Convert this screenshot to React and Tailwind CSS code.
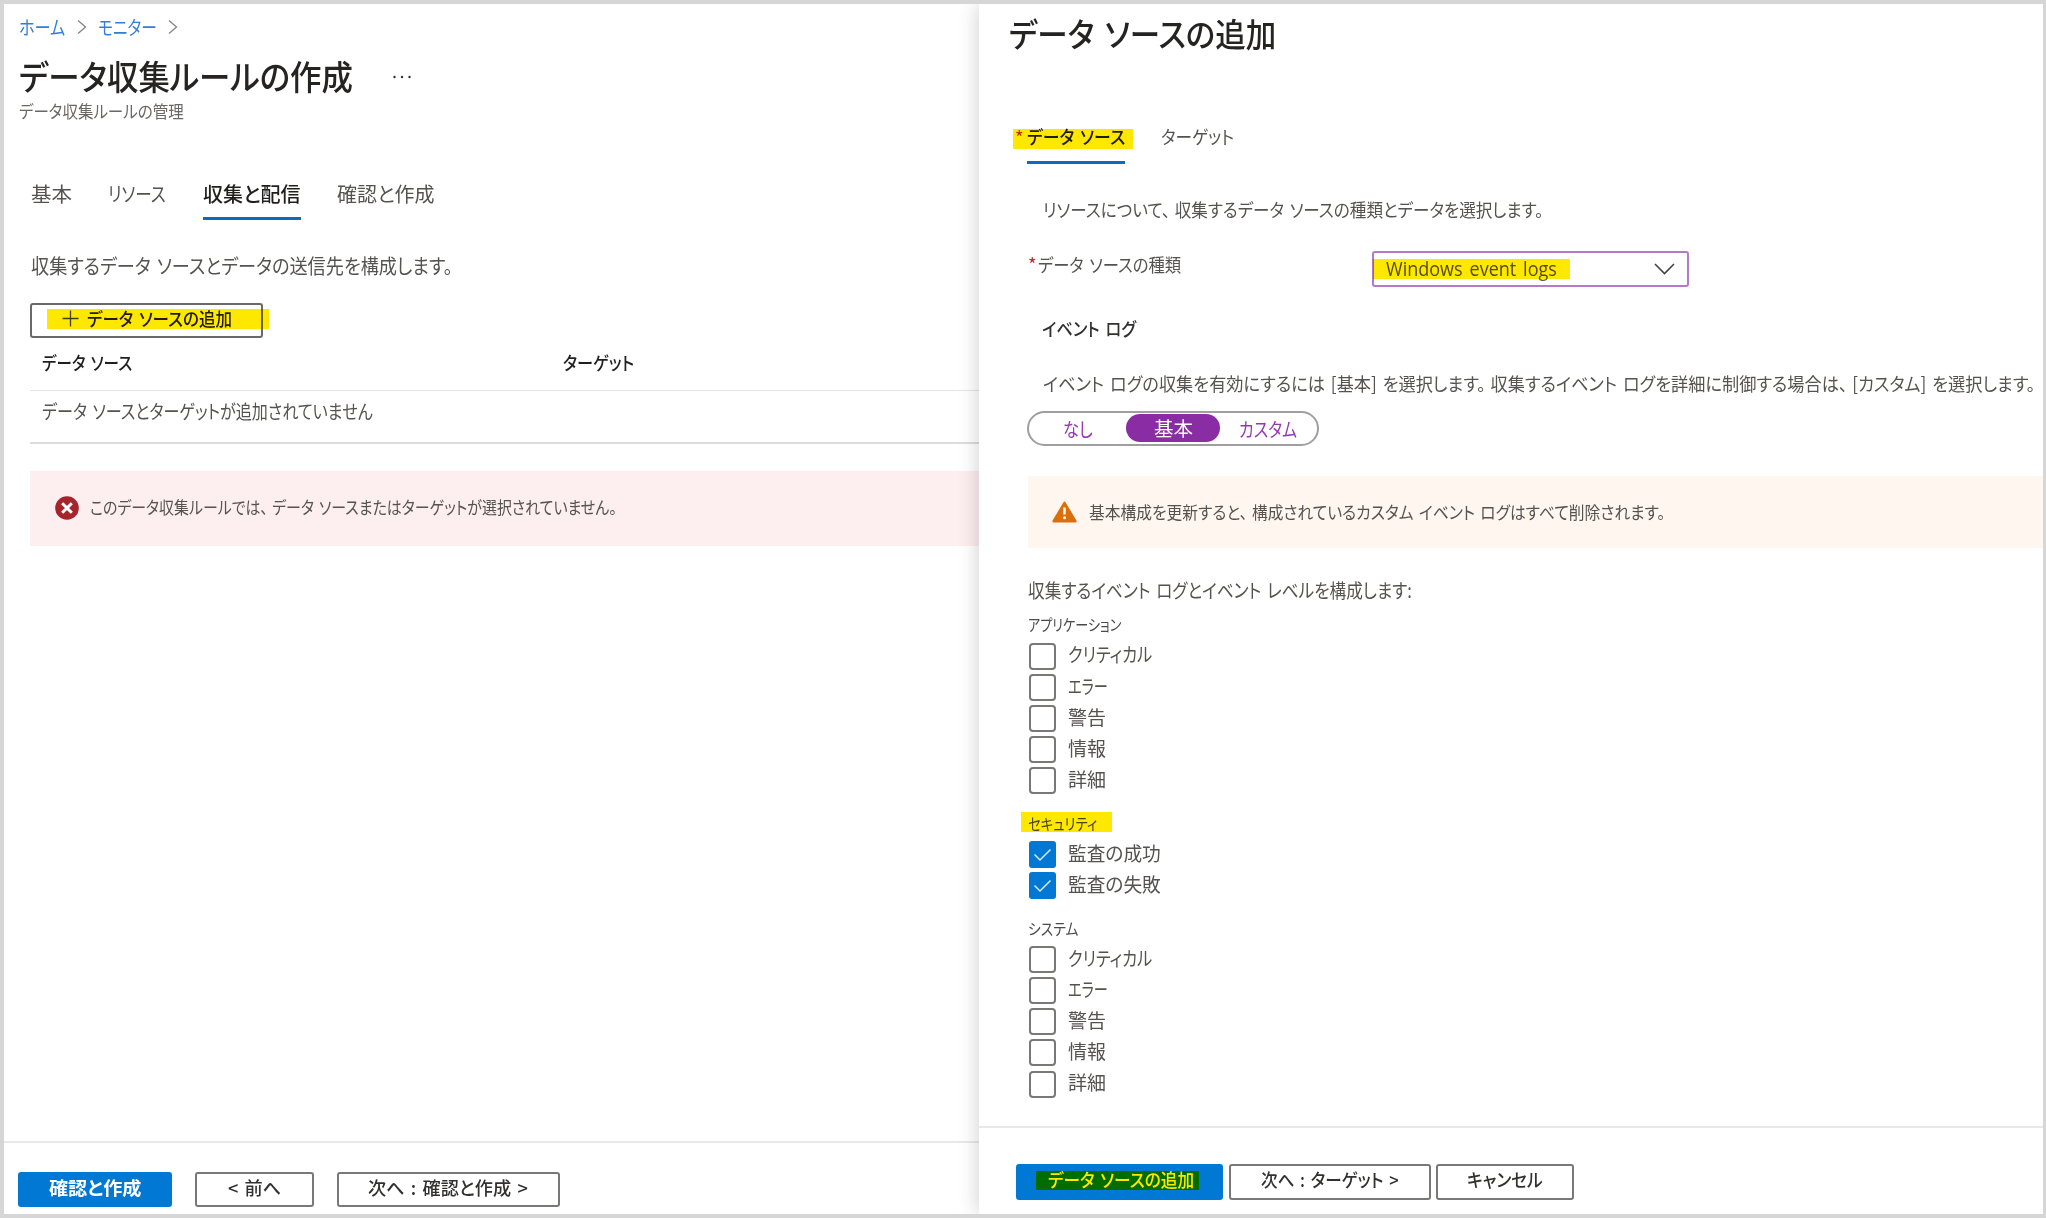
import { useLayoutEffect, useRef } from "react";

// Single line of text condensed horizontally to fill the width of its box.
function Fit({ children, className = "" }) {
  const box = useRef(null);
  const text = useRef(null);
  useLayoutEffect(() => {
    const natural = text.current.offsetWidth;
    if (natural) {
      text.current.style.transform = `scaleX(${box.current.clientWidth / natural})`;
    }
  });
  // Clauses are split after punctuation so a small gap can follow each one.
  const clauses = children.split(/(?<=[、。])(?=.)/);
  return (
    <span ref={box} className={`block shrink-0 whitespace-nowrap leading-none ${className}`}>
      <span ref={text} className="inline-block origin-left [font-feature-settings:'palt'] [word-spacing:0.12em]">
        {clauses.map((clause, i) => (
          <span key={i} className={i < clauses.length - 1 ? "mr-[0.28em]" : ""}>
            {clause}
          </span>
        ))}
      </span>
    </span>
  );
}

function Marker({ className }) {
  return <span className={`absolute bg-[#ffe800] mix-blend-multiply ${className}`} />;
}

function Chevron({ className }) {
  return (
    <svg className={className} width="10" height="16" viewBox="0 0 10 16" fill="none" stroke="#8a8886" strokeWidth="1.4">
      <path d="M1 1.5 8.5 8 1 14.5" />
    </svg>
  );
}

function Checkbox({ label, width, checked }) {
  return (
    <label className="flex h-[31.2px] items-center">
      <span
        className={
          checked
            ? "flex h-[27px] w-[27px] items-center justify-center rounded-[3px] bg-[#0078d4]"
            : "h-[27px] w-[27px] rounded-[4px] border-2 border-[#7a7876]"
        }
      >
        {checked && (
          <svg width="19" height="14" viewBox="0 0 19 14" fill="none" stroke="#d8ecff" strokeWidth="1.5">
            <path d="M1.5 6.5 7 12 17.5 1.5" />
          </svg>
        )}
      </span>
      <Fit className={`mb-[4px] ml-[12px] text-[19.5px] text-[#555350] ${width}`}>{label}</Fit>
    </label>
  );
}

const levels = [
  ["クリティカル", "w-[84px]"],
  ["エラー", "w-[40px]"],
  ["警告", "w-[38px]"],
  ["情報", "w-[38px]"],
  ["詳細", "w-[38px]"],
];

function MainBlade() {
  return (
    <section className="flex w-[975px] shrink-0 flex-col">
      <nav className="mt-[10px] flex h-[26px] items-center pl-[15px] text-[19px] text-[#2f7fd6]">
        <Fit className="mb-[1px] w-[46px]">ホーム</Fit>
        <Chevron className="ml-[12px]" />
        <Fit className="mb-[1px] ml-[11px] w-[59px]">モニター</Fit>
        <Chevron className="ml-[11px]" />
      </nav>
      <div className="mt-[15px] flex h-[42px] items-center pl-[15px]">
        <h1 className="font-medium text-[#252423]">
          <Fit className="w-[334px] text-[34px]">データ収集ルールの作成</Fit>
        </h1>
        <svg className="mt-[2px] ml-[40px]" width="18" height="4" viewBox="0 0 18 4" fill="#323130">
          <circle cx="1.5" cy="2" r="1.2" />
          <circle cx="9" cy="2" r="1.2" />
          <circle cx="16.5" cy="2" r="1.2" />
        </svg>
      </div>
      <Fit className="mt-[5px] ml-[15px] w-[165px] text-[17.5px] text-[#6a6866]">データ収集ルールの管理</Fit>

      <div className="mt-[64px] flex h-[36px] items-start text-[20px] text-[#555350]">
        <Fit className="ml-[27px] w-[41px]">基本</Fit>
        <Fit className="ml-[36px] w-[58px]">リソース</Fit>
        <div className="ml-[37px] flex h-[36px] flex-col justify-between border-b-[3px] border-[#0f6cbd] font-medium text-[#201f1e]">
          <Fit className="w-[98px]">収集と配信</Fit>
        </div>
        <Fit className="ml-[36px] w-[98px]">確認と作成</Fit>
      </div>

      <Fit className="mt-[36px] ml-[27px] w-[422px] text-[20px] text-[#555350]">
        収集するデータ ソースとデータの送信先を構成します。
      </Fit>

      <button className="relative mt-[27px] ml-[26px] flex h-[35px] w-[233px] items-center rounded-[3px] border-2 border-[#6b6967] pb-[3px] pl-[30px]">
        <svg width="17" height="17" viewBox="0 0 17 17" stroke="#444" strokeWidth="1.3">
          <path d="M8.5 0.5v16M0.5 8.5h16" />
        </svg>
        <Fit className="ml-[8px] w-[145px] text-left text-[18.5px] font-medium text-[#201f1e]">データ ソースの追加</Fit>
        <Marker className="top-[4px] left-[15px] h-[20px] w-[222px]" />
      </button>

      <div className="ml-[26px] flex h-[53px] items-center border-b border-[#e4e4e4] pb-[2px] text-[18.5px] font-medium text-[#201f1e]">
        <Fit className="ml-[12px] w-[90px]">データ ソース</Fit>
        <Fit className="ml-[431px] w-[71px]">ターゲット</Fit>
      </div>
      <div className="ml-[26px] flex h-[53px] items-center border-b-2 border-[#dcdcdc] pb-[12px] text-[19px] text-[#555350]">
        <Fit className="ml-[12px] w-[331px]">データ ソースとターゲットが追加されていません</Fit>
      </div>

      <div className="mt-[27px] ml-[26px] flex h-[75px] items-center bg-[#fdeef0]">
        <svg className="ml-[25px]" width="24" height="24" viewBox="0 0 24 24">
          <circle cx="12" cy="12" r="11.8" fill="#a4262c" />
          <path d="M7.2 7.2l9.6 9.6M16.8 7.2l-9.6 9.6" stroke="#fff" strokeWidth="3" />
        </svg>
        <Fit className="mb-[2px] ml-[11px] w-[527px] text-[17.5px] text-[#555350]">
          このデータ収集ルールでは、データ ソースまたはターゲットが選択されていません。
        </Fit>
      </div>

      <footer className="mt-auto flex h-[73px] items-start border-t-2 border-[#e8e8e8] pt-[29px] pl-[14px] text-[18.5px] font-medium text-[#323130]">
        <button className="flex h-[35px] w-[154px] items-center justify-center rounded-[3px] bg-[#0078d4] pb-[5px] text-white">
          <Fit className="w-[92px] text-left font-bold">確認と作成</Fit>
        </button>
        <button className="ml-[23px] flex h-[35px] w-[119px] items-center justify-center rounded-[3px] border-2 border-[#7a7876] pb-[5px]">
          <Fit className="w-[53px] text-left">&lt; 前へ</Fit>
        </button>
        <button className="ml-[23px] flex h-[35px] w-[223px] items-center justify-center rounded-[3px] border-2 border-[#7a7876] pr-[1px] pb-[5px]">
          <Fit className="w-[160px] text-left">次へ : 確認と作成 &gt;</Fit>
        </button>
      </footer>
    </section>
  );
}

function SourcePanel() {
  return (
    <section className="relative flex min-w-0 flex-1 flex-col bg-white shadow-[0_0_20px_rgba(0,0,0,0.2)]">
      <h2 className="mt-[13px] ml-[30px] font-medium text-[#252423]">
        <Fit className="w-[267px] text-[33px]">データ ソースの追加</Fit>
      </h2>

      <div className="relative mt-[77px] flex h-[37px] items-start pl-[36px] text-[18.5px]">
        <span className="w-[12px] pt-[1px] leading-none text-[#c4262e]">*</span>
        <div className="flex h-[37px] flex-col border-b-[3px] border-[#0f6cbd] font-medium text-[#201f1e]">
          <Fit className="w-[98px]">データ ソース</Fit>
        </div>
        <Fit className="ml-[36px] w-[73px] text-[#555350]">ターゲット</Fit>
        <Marker className="top-[2px] left-[34px] h-[20px] w-[120px]" />
      </div>

      <Fit className="mt-[36px] ml-[64px] w-[500px] text-[18.5px] text-[#555350]">
        リソースについて、収集するデータ ソースの種類とデータを選択します。
      </Fit>

      <div className="mt-[32px] flex h-[36px] items-center text-[18.5px] text-[#555350]">
        <span className="mb-[8px] ml-[49px] w-[10px] leading-none text-[#c4262e]">*</span>
        <Fit className="mb-[8px] w-[143px]">データ ソースの種類</Fit>
        <div className="relative ml-[191px] flex h-[36px] w-[317px] items-center justify-between rounded-[3px] border-2 border-[#b57ac5] pr-[12px] pl-[12px]">
          <Fit className="w-[171px] font-['Open_Sans'] text-[19.5px]">Windows event logs</Fit>
          <svg width="21" height="12" viewBox="0 0 21 12" fill="none" stroke="#444" strokeWidth="1.6">
            <path d="M1 1l9.5 9.5L20 1" />
          </svg>
          <Marker className="top-[6px] -left-[1px] h-[20px] w-[197px]" />
        </div>
      </div>

      <h3 className="mt-[32px] ml-[63px] font-medium text-[#323130]">
        <Fit className="w-[94px] text-[18.5px]">イベント ログ</Fit>
      </h3>
      <Fit className="mt-[37px] ml-[64px] w-[992px] text-[18.5px] text-[#555350]">
        イベント ログの収集を有効にするには [基本] を選択します。収集するイベント ログを詳細に制御する場合は、[カスタム] を選択します。
      </Fit>

      <div className="mt-[18px] ml-[48px] flex h-[35px] w-[292px] items-center rounded-full border-2 border-[#a19f9d] text-[19px] text-[#9437b0]">
        <Fit className="ml-[34px] w-[30px]">なし</Fit>
        <div className="ml-[33px] flex h-[28px] w-[94px] items-center justify-center rounded-full bg-[#8a2da5] text-white">
          <Fit className="mb-[2px] w-[39px]">基本</Fit>
        </div>
        <Fit className="ml-[19px] w-[58px]">カスタム</Fit>
      </div>

      <div className="mt-[30px] ml-[49px] flex h-[72px] items-center bg-[#fff7ef]">
        <svg className="ml-[24px]" width="25" height="22" viewBox="0 0 25 22">
          <path d="M12.5 1.8 23.4 20.2H1.6z" fill="#db6f0b" stroke="#db6f0b" strokeWidth="2.4" strokeLinejoin="round" />
          <path d="M12.5 6.5v7" stroke="#fff" strokeWidth="2.4" />
          <circle cx="12.5" cy="16.8" r="1.5" fill="#fff" />
        </svg>
        <Fit className="ml-[12px] w-[576px] text-[17.5px] text-[#555350]">
          基本構成を更新すると、構成されているカスタム イベント ログはすべて削除されます。
        </Fit>
      </div>

      <Fit className="mt-[32px] ml-[49px] w-[384px] text-[19.5px] text-[#555350]">
        収集するイベント ログとイベント レベルを構成します:
      </Fit>
      <Fit className="mt-[18px] ml-[49px] w-[93px] text-[15.5px] text-[#4b4a48]">アプリケーション</Fit>
      <div className="mt-[8px] ml-[50px]">
        {levels.map(([label, width]) => (
          <Checkbox key={label} label={label} width={width} />
        ))}
      </div>

      <div className="relative mt-[20px] ml-[49px] text-[15.5px] text-[#4b4a48]">
        <Fit className="w-[69px]">セキュリティ</Fit>
        <Marker className="-top-[4px] -left-[7px] h-[20px] w-[91px]" />
      </div>
      <div className="mt-[7px] ml-[50px]">
        <Checkbox label="監査の成功" width="w-[93px]" checked />
        <Checkbox label="監査の失敗" width="w-[93px]" checked />
      </div>

      <Fit className="mt-[20px] ml-[49px] w-[50px] text-[15.5px] text-[#4b4a48]">システム</Fit>
      <div className="mt-[7px] ml-[50px]">
        {levels.map(([label, width]) => (
          <Checkbox key={label} label={label} width={width} />
        ))}
      </div>

      <footer className="mt-auto flex h-[88px] items-start border-t-2 border-[#e8e8e8] pt-[36px] pl-[37px] text-[18.5px] font-medium text-[#323130]">
        <button className="relative flex h-[36px] w-[207px] items-center justify-center rounded-[3px] bg-[#0078d4] pb-[5px] text-white">
          <Fit className="mr-[1px] ml-[3px] w-[146px] text-left">データ ソースの追加</Fit>
          <Marker className="top-[7px] left-[20px] h-[19px] w-[163px]" />
        </button>
        <button className="ml-[6px] flex h-[36px] w-[202px] items-center justify-center rounded-[3px] border-2 border-[#7a7876] pb-[5px]">
          <Fit className="w-[138px] text-left">次へ : ターゲット &gt;</Fit>
        </button>
        <button className="ml-[5px] flex h-[36px] w-[138px] items-center justify-center rounded-[3px] border-2 border-[#7a7876] pb-[5px]">
          <Fit className="w-[76px] text-left">キャンセル</Fit>
        </button>
      </footer>
    </section>
  );
}

export default function App() {
  return (
    <div
      lang="ja"
      className="flex h-[1218px] w-[2046px] overflow-hidden border-4 border-r-[3px] border-[#d6d6d6] bg-white font-['Noto_Sans_CJK_JP',sans-serif]"
    >
      <MainBlade />
      <SourcePanel />
    </div>
  );
}
